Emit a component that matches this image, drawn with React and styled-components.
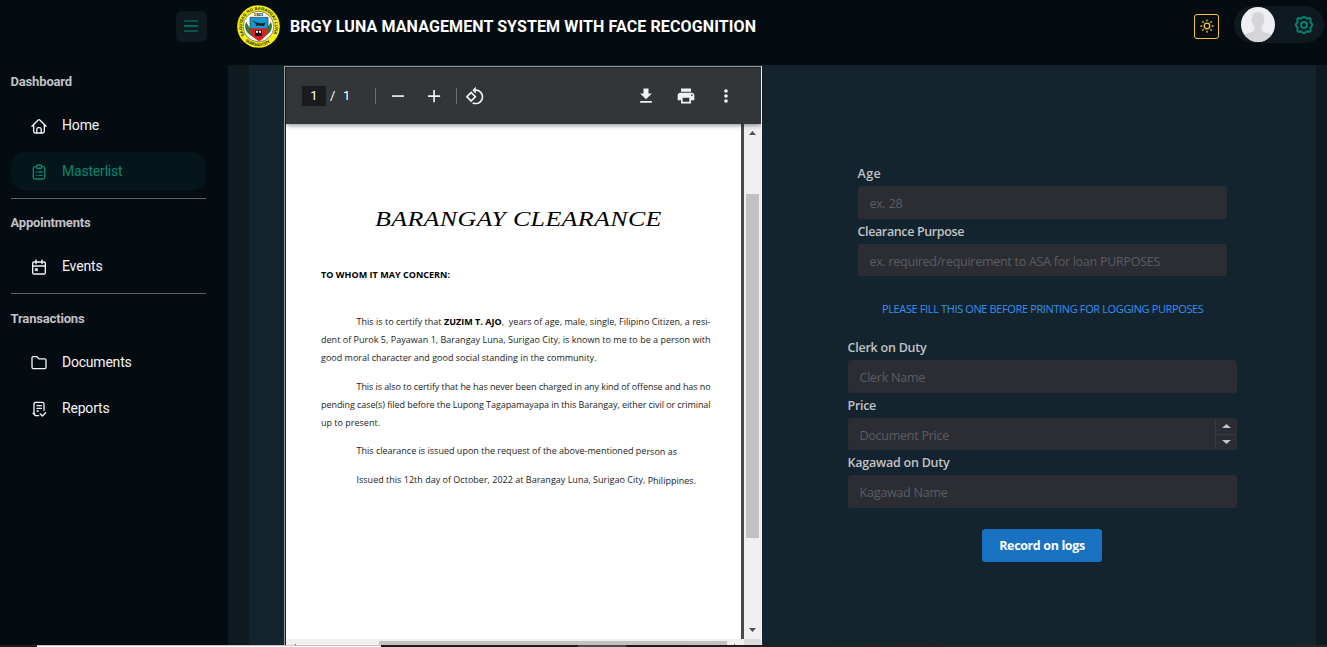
import React from "react";
import styled, { createGlobalStyle } from "styled-components";

const GlobalStyle = createGlobalStyle`
  *, *::before, *::after { box-sizing: border-box; }
  html, body { margin: 0; padding: 0; background: #040b11; }
  body { overflow: hidden; font-family: Roboto, "Liberation Sans", sans-serif; }
`;

const uiFont = `"Open Sans", "Noto Sans", sans-serif`;
const headFont = `Roboto, "Liberation Sans", sans-serif`;
const scriptFont = `"Lucida Calligraphy", "Z003", "URW Chancery L", "Liberation Serif", serif`;

/* Letter spacing that makes a text of the given font take the given width. */
const pen = document.createElement("canvas").getContext("2d");
function tracking(text, font, width) {
  pen.font = font;
  return (width - pen.measureText(text).width) / text.length;
}

const Screen = styled.div`
  width: 1327px;
  height: 647px;
  display: flex;
  flex-direction: column;
  overflow: hidden;
  background: #040b11;
`;
const Body = styled.div`
  display: flex;
  height: 645px;
`;

/* ---------- sidebar ---------- */
const Sidebar = styled.aside`
  width: 228px;
  padding: 11px 22px 0 11px;
  display: flex;
  flex-direction: column;
`;
const MenuButton = styled.button`
  align-self: flex-end;
  width: 31px;
  height: 31px;
  margin-right: -1px;
  padding: 0 1px 1px 0;
  border: 0;
  border-radius: 6px;
  background: #0e1a20;
  display: flex;
  align-items: center;
  justify-content: center;
  color: #058372;
`;
const Section = styled.section`
  display: flex;
  flex-direction: column;
  gap: 7px;
  padding-top: ${(p) => p.$top}px;
`;
const SectionTitle = styled.h2`
  margin: 0 0 ${(p) => p.$gap}px -0.5px;
  height: 16px;
  font: 700 13px/16px ${headFont};
  letter-spacing: ${(p) => p.$track}px;
  color: #c1c2c5;
  white-space: nowrap;
`;
const NavItem = styled.a`
  height: 39px;
  display: flex;
  align-items: center;
  gap: 15px;
  padding-left: 20px;
  border-radius: 15px;
  font: 400 14px/18px ${headFont};
  letter-spacing: ${(p) => p.$track}px;
  color: ${(p) => (p.$active ? "#078672" : "#f4f4f5")};
  background: ${(p) => (p.$active ? "#05161a" : "transparent")};
  svg { flex: none; }
`;
const NavText = styled.span`
  padding-bottom: 2px;
`;
const Rule = styled.div`
  height: 1px;
  margin-top: ${(p) => p.$top}px;
  background: #5c5f66;
`;

/* ---------- header ---------- */
const Main = styled.div`
  width: 1099px;
  display: flex;
  flex-direction: column;
`;
const Header = styled.header`
  height: 65px;
  display: flex;
  align-items: flex-start;
  padding: 5px 3px 0 9px;
`;
const Title = styled.h1`
  margin: 12px 0 0 10px;
  flex: 1;
  font: 700 16px/20px ${headFont};
  letter-spacing: ${(p) => p.$track}px;
  color: #fff;
  white-space: nowrap;
`;
const ThemeButton = styled.button`
  width: 25px;
  height: 25px;
  margin: 9px 15px 0 0;
  padding: 0 0 1px;
  border: 1px solid #f5c535;
  border-radius: 3px;
  background: transparent;
  color: #f5c535;
  display: flex;
  align-items: center;
  justify-content: center;
`;
const UserPill = styled.div`
  width: 90px;
  height: 37px;
  margin-top: 1px;
  padding: 0 10px 0 7px;
  border-radius: 19px;
  background: #0e1a20;
  color: #058372;
  display: flex;
  align-items: center;
  justify-content: space-between;
`;

/* ---------- content ---------- */
const Content = styled.main`
  height: 580px;
  display: flex;
  padding: 1px 0 0 35px;
  margin-left: 21px;
  margin-right: 11px;
  background: #14242e;
`;
const Backdrop = styled.div`
  background: #0e1a20;
`;
const Viewer = styled.section`
  width: 478px;
  height: 581px;
  border: 1px solid;
  border-color: #9a9ca0 #f0f0f0 #f0f0f0 #9a9a9a;
  overflow: hidden;
`;
const ViewerInner = styled.div`
  height: 600px;
  border-left: 1px solid #12202a;
  border-top: 1px solid #22242e;
`;
const Toolbar = styled.div`
  position: relative;
  height: 56px;
  display: flex;
  align-items: center;
  padding: 0 25px 0 16px;
  background: #323639;
  color: #f1f1f1;
  box-shadow: 0 1px 5px rgba(0, 0, 0, 0.5);
  font: 400 13px/20px ${headFont};
`;
const PageNumber = styled.span`
  width: 24px;
  height: 20px;
  text-align: center;
  background: #191b1c;
  color: #fff;
`;
const PageTotal = styled.span`
  width: 49px;
  padding-left: 4px;
  word-spacing: 4.5px;
  color: #fff;
`;
const Separator = styled.span`
  width: 1px;
  height: 16px;
  background: #6b6e70;
`;
const ToolIcon = styled.span`
  display: flex;
  margin-left: ${(p) => p.$left || 0}px;
`;
const Push = styled.span`
  flex: 1;
`;
const ViewArea = styled.div`
  display: flex;
  height: 515px;
`;
const Paper = styled.article`
  width: 455px;
  padding: 82px 31px 0 35px;
  background: #fff;
  color: #222;
`;
const Gutter = styled.div`
  width: 3px;
  background: #484b4e;
`;
const VScroll = styled.div`
  width: 17px;
  padding: 7px 2px 7px;
  background: #f0f0f0;
  display: flex;
  flex-direction: column;
  align-items: center;
  color: #505050;
`;
const VThumb = styled.div`
  width: 13px;
  height: 344px;
  margin: 59px 0 auto;
  background: #c1c1c1;
`;
const HScroll = styled.div`
  height: 17px;
  display: flex;
  padding-left: 8.5px;
  background: linear-gradient(#f0f0f0, #f0f0f0) left / 458px 100% no-repeat #dcdcdc;
`;
const HThumb = styled.div`
  width: 348px;
  height: 13px;
  margin: 2px 0 0 83px;
  background: #c1c1c1;
`;
const Tick = styled.i`
  width: 1px;
  height: 1px;
  margin: 5px 0 0 ${(p) => p.$left || 0}px;
  background: #505050;
`;
const DocTitle = styled.h2`
  width: 240px;
  margin: 0 0 34px 54px;
  font: italic 400 22px/26px ${scriptFont};
  letter-spacing: ${(p) => p.$track}px;
  color: #000;
  white-space: nowrap;
  transform: scaleX(1.18);
  transform-origin: left;
`;
const Salutation = styled.p`
  margin: 0 0 29px;
  font: 700 9px/18px ${uiFont};
  letter-spacing: ${(p) => p.$track}px;
  color: #000;
`;
const Paragraph = styled.div`
  margin-bottom: ${(p) => p.$gap ?? 11}px;
`;
const Line = styled.div`
  height: 18px;
  padding-left: ${(p) => (p.$indent ? 35.5 : 0)}px;
  font: 400 9px/18px ${uiFont};
  letter-spacing: ${(p) => p.$track}px;
  white-space: pre;
  b { color: #000; }
`;
const Lowered = styled.span`
  position: relative;
  top: 1px;
`;

/* ---------- form ---------- */
const FormArea = styled.form`
  width: 389px;
  margin-left: 86px;
  padding-top: 98px;
`;
const Group = styled.div`
  padding: 0 ${(p) => p.$inset || 0}px;
`;
const Field = styled.label`
  display: flex;
  flex-direction: column;
  height: ${(p) => p.$height}px;
`;
const FieldLabel = styled.span`
  height: 22px;
  margin-left: -0.5px;
  font: 600 12.5px/19px ${uiFont};
  color: #c1c2c5;
`;
const InputBox = styled.span`
  display: flex;
  height: ${(p) => p.$height || 33}px;
  border-radius: 3.5px;
  background: #2c2d32;
  overflow: hidden;
`;
const Input = styled.input`
  flex: 1;
  min-width: 0;
  height: 33px;
  padding: 2px 11.5px 0;
  border: 0;
  outline: 0;
  background: transparent;
  font: 400 12.5px/18px ${uiFont};
  letter-spacing: ${(p) => p.$track}px;
  &::placeholder { color: #5a5d64; opacity: 1; }
`;
const Spinner = styled.span`
  width: 22px;
  padding: 1px 1px 1px 0;
  display: flex;
  flex-direction: column;
  color: #c1c2c5;
`;
const Step = styled.span`
  flex: 1;
  display: flex;
  align-items: center;
  justify-content: center;
  border-left: 1px solid #383a40;
  & + & { border-top: 1px solid #383a40; }
`;
const Notice = styled.p`
  margin: 0 0 19px;
  padding: 23px 0 0 34px;
  font: 400 11px/20px ${uiFont};
  letter-spacing: ${(p) => p.$track}px;
  color: #3391f2;
  white-space: nowrap;
`;
const SubmitButton = styled.button`
  display: block;
  width: 120px;
  height: 33px;
  margin: 0 0 0 134px;
  padding: 0;
  border: 0;
  border-radius: 3.5px;
  background: #1971c2;
  color: #fff;
  font: 700 12.5px/18px ${uiFont};
`;

/* ---------- bottom edge ---------- */
const Edge = styled.footer`
  height: 2px;
  display: flex;
  background: #1e1b1c;
`;
const EdgePart = styled.div`
  width: ${(p) => p.$w}px;
  background: ${(p) => p.$bg};
`;

/* ---------- drawings ---------- */
const Outline = ({ size = 16, w = 1.8, children }) => (
  <svg width={size} height={size} viewBox="0 0 24 24" fill="none" stroke="currentColor"
    strokeWidth={w} strokeLinecap="round" strokeLinejoin="round">{children}</svg>
);
const HomeIcon = () => (
  <Outline w={2}>
    <path d="M1.5 12.5 10.8 3a1.7 1.7 0 0 1 2.4 0l9.3 9.5" />
    <path d="M4 10.5V20a2.5 2.5 0 0 0 2.5 2.5h11A2.5 2.5 0 0 0 20 20v-9.5" />
    <path d="M8.7 22.3V17a2.6 2.6 0 0 1 2.6-2.6h1.4a2.6 2.6 0 0 1 2.6 2.6v5.3" />
  </Outline>
);
const ClipboardIcon = () => (
  <Outline w={2}>
    <path d="M8 4H6a2.5 2.5 0 0 0-2.5 2.5v13A2.5 2.5 0 0 0 6 22.500h12a2.500 2.500 0 0 0 2.500-2.500V6.500A2.500 2.500 0 0 0 18 4h-2" />
    <path d="M9.500 1.500h5L16.500 4l-2 2.800h-5L7.500 4z" />
    <path d="M8 12h.5M12 12h4.500M8 17h.5M12 17h4.500" />
  </Outline>
);
const CalendarIcon = () => (
  <Outline w={2}>
    <rect x="2.500" y="4.500" width="19" height="18" rx="2" />
    <path d="M2.500 10.500h19M7.500 1.500v5.500M16.500 1.500v5.500" />
    <rect x="6.700" y="14.500" width="3" height="3" fill="currentColor" strokeWidth="1" />
  </Outline>
);
const FolderIcon = () => (
  <Outline w={2}>
    <path d="M1.500 4.500a2 2 0 0 1 2-2h5.300l3 3.200h8.700a2 2 0 0 1 2 2V18.500a2 2 0 0 1-2 2h-17a2 2 0 0 1-2-2z" />
  </Outline>
);
const ReportIcon = () => (
  <Outline w={2}>
    <path d="M19.500 14V4.500a2.500 2.500 0 0 0-2.500-2.500H7a2.500 2.500 0 0 0-2.500 2.500v14.500" />
    <path d="M3 18.500h2.500M4.500 18.500A3.500 3.500 0 0 0 8 22H11.500" />
    <path d="M9 7h6.500M9 11h6.500M9 15h2M14 19.500l3 3 5-5" />
  </Outline>
);
const MenuIcon = () => (
  <svg width="14" height="12" viewBox="0 0 14 12" fill="currentColor">
    <rect y="0.500" width="14" height="1" /><rect y="5.200" width="14" height="1.500" /><rect y="10.500" width="14" height="1" />
  </svg>
);
const SunIcon = () => (
  <Outline size={14} w={2.200}>
    <circle cx="12" cy="12" r="4.800" />
    <path d="M12 1.500v1.500M12 21v1.500M1.500 12H3M21 12h1.500M4.600 4.600l1 1M18.400 18.400l1 1M4.600 19.400l1-1M18.400 5.600l1-1" />
  </Outline>
);
const GearIcon = () => (
  <Outline size={20} w={2.400}>
    <circle cx="12" cy="12" r="3.500" />
    <path d="M9.900 3.500a2.300 2.300 0 0 1 4.200 0 2.300 2.300 0 0 0 2.500.7 2.300 2.300 0 0 1 3.200 3.200 2.300 2.300 0 0 0 .7 2.500 2.300 2.300 0 0 1 0 4.200 2.300 2.300 0 0 0-.7 2.500 2.300 2.300 0 0 1-3.200 3.200 2.300 2.300 0 0 0-2.500.7 2.300 2.300 0 0 1-4.200 0 2.300 2.300 0 0 0-2.500-.7 2.300 2.300 0 0 1-3.200-3.200 2.300 2.300 0 0 0-.7-2.500 2.300 2.300 0 0 1 0-4.200 2.300 2.300 0 0 0 .7-2.500 2.300 2.300 0 0 1 3.200-3.200 2.300 2.300 0 0 0 2.500-.7z" />
  </Outline>
);
const Avatar = () => (
  <svg width="34" height="35" viewBox="0 0 34 35">
    <defs><clipPath id="face"><ellipse cx="17" cy="17.500" rx="17" ry="17.500" /></clipPath></defs>
    <g clipPath="url(#face)">
      <rect width="34" height="35" fill="#efeef3" />
      <path d="M17 5c4.300 0 6.500 3 6 7.300 1 .7.500 3.200-.7 3.700-.3 2-1 3-1.800 4v3.500c2 2.500 9 2 12.500 6V35H1v-5.500c3.500-4 10.500-3.500 12.500-6V20c-.8-1-1.500-2-1.800-4-1.200-.5-1.700-3-.7-3.700C10.500 8 12.700 5 17 5z" fill="#d5d5d8" />
    </g>
  </svg>
);
const SealSvg = styled.svg`
  display: block;
  overflow: visible;
  font: 700 4.200px "Liberation Sans", sans-serif;
`;
const Seal = () => (
  <SealSvg width="43" height="43" viewBox="0 0 43 43">
    <defs>
      <path id="sealTop" d="M7.600 30.500a16.600 16.600 0 1 1 27.800 0" />
      <path id="sealBottom" d="M8.300 36a19.700 19.700 0 0 0 26.400 0" />
    </defs>
    <circle cx="21.500" cy="21.500" r="21.300" fill="#f4ef0c" />
    <circle cx="21.500" cy="21.500" r="15.300" fill="#fff" stroke="#3b3b10" strokeWidth="0.600" />
    <g fill="#222">
      <text textLength="69"><textPath href="#sealTop">SAGUISAG NG BARANGAY LUNA</textPath></text>
      <text textLength="27"><textPath href="#sealBottom">SURIGAO CITY</textPath></text>
    </g>
    <path d="M9.500 17.500c-2 3-1 9 3.500 12l4 2.500c0-4-2-6-3.500-8M33.500 17.500c2 3 1 9-3.500 12l-4 2.500c0-4 2-6 3.500-8" fill="#2f7d36" stroke="#174d1c" strokeWidth="0.700" />
    <g transform="translate(0 -5)">
      <text x="21.500" y="16" textAnchor="middle">1923</text>
      <path d="M13 17.300h18v11.200H13z" fill="#1896cf" stroke="#222" strokeWidth="0.600" />
      <path d="M13 28.500h18c0 6-4.500 10.500-9 12.700C17.500 39 13 34.500 13 28.500z" fill="#da2222" />
      <path d="m15.500 20.500 6 2.500 4 .500 3-1-1.500 3.500-5-.5-3.500.5 1-1.500z" fill="#14202a" />
      <path d="M18.200 30h6.600v6h-6.600z" fill="#111" />
      <path d="M19 30.800h2v2h-2zM22 30.800h2v2h-2z" fill="#fff" />
    </g>
  </SealSvg>
);
const Glyph = ({ size = 24, children }) => (
  <svg width={size} height={size} viewBox="0 0 24 24" fill="currentColor">{children}</svg>
);
const Triangle = ({ down, w = 7, h = 4 }) => (
  <svg width={w} height={h} viewBox="0 0 8 4" preserveAspectRatio="none" fill="currentColor">
    <path d={down ? "M0 0h8L4 4z" : "M0 4h8L4 0z"} />
  </svg>
);

/* ---------- parts ---------- */
const Heading = ({ text, width, gap }) => (
  <SectionTitle $gap={gap} $track={tracking(text, `700 13px ${headFont}`, width)}>{text}</SectionTitle>
);
const Nav = ({ icon, text, width, active }) => (
  <NavItem $active={active} $track={tracking(text, `400 14px ${headFont}`, width)}>
    {icon}<NavText>{text}</NavText>
  </NavItem>
);
const LabelText = styled.span`
  letter-spacing: ${(p) => p.$track}px;
`;
const Label = ({ text, width, weight = 600 }) => (
  <LabelText $track={tracking(text, `${weight} 12.5px ${uiFont}`, width)}>{text}</LabelText>
);
const TextField = ({ label, labelWidth, hint, hintWidth, height = 58, box, children }) => (
  <Field $height={height}>
    <FieldLabel><Label text={label} width={labelWidth} /></FieldLabel>
    <InputBox $height={box}>
      <Input placeholder={hint} $track={tracking(hint, `400 12.5px ${uiFont}`, hintWidth)} />
      {children}
    </InputBox>
  </Field>
);
const DocLine = ({ text, width, indent, children }) => (
  <Line $indent={indent} $track={tracking(text, `400 9px ${uiFont}`, width)}>{children || text}</Line>
);

const docTitle = "BARANGAY CLEARANCE";
const greeting = "TO WHOM IT MAY CONCERN:";
const appTitle = "BRGY LUNA MANAGEMENT SYSTEM WITH FACE RECOGNITION";
const notice = "PLEASE FILL THIS ONE BEFORE PRINTING FOR LOGGING PURPOSES";

export default function App() {
  return (
    <Screen>
      <GlobalStyle />
      <Body>
        <Sidebar>
          <MenuButton><MenuIcon /></MenuButton>
          <Section $top={32}>
            <Heading text="Dashboard" width={61.500} gap={9} />
            <Nav icon={<HomeIcon />} text="Home" width={37} />
            <Nav icon={<ClipboardIcon />} text="Masterlist" width={60.500} active />
          </Section>
          <Rule $top={7} />
          <Section $top={16}>
            <Heading text="Appointments" width={80} gap={9} />
            <Nav icon={<CalendarIcon />} text="Events" width={40.500} />
          </Section>
          <Rule $top={7} />
          <Section $top={17}>
            <Heading text="Transactions" width={74} gap={9} />
            <Nav icon={<FolderIcon />} text="Documents" width={69.500} />
            <Nav icon={<ReportIcon />} text="Reports" width={47.500} />
          </Section>
        </Sidebar>

        <Main>
          <Header>
            <Seal />
            <Title $track={tracking(appTitle, `700 16px ${headFont}`, 466.500)}>{appTitle}</Title>
            <ThemeButton><SunIcon /></ThemeButton>
            <UserPill><Avatar /><GearIcon /></UserPill>
          </Header>
          <Backdrop>
            <Content>
              <Viewer>
                <ViewerInner>
                  <Toolbar>
                    <PageNumber>1</PageNumber>
                    <PageTotal>/ 1</PageTotal>
                    <Separator />
                    <ToolIcon $left={13}>
                      <Glyph size={18}><path d="M4 11h16v2.200H4z" /></Glyph>
                    </ToolIcon>
                    <ToolIcon $left={18}>
                      <Glyph size={18}><path d="M4 11h7V4h2.200v7h7v2.200h-7v7H11v-7H4z" /></Glyph>
                    </ToolIcon>
                    <ToolIcon $left={13}><Separator /></ToolIcon>
                    <ToolIcon $left={8}>
                      <Glyph size={20}><path d="M7.340 6.410.860 12.900l6.490 6.480 6.490-6.480-6.500-6.490zM3.690 12.900l3.660-3.660L11 12.900l-3.660 3.660-3.650-3.660zM19.360 6.640A8.950 8.950 0 0 0 13 4V.760L8.760 5 13 9.240V6c1.790 0 3.580.680 4.950 2.050a7.007 7.007 0 0 1 0 9.900 6.973 6.973 0 0 1-7.920 1.440l-1.490 1.490C10.020 21.620 11.510 22 13 22a8.980 8.980 0 0 0 6.360-2.640 8.980 8.980 0 0 0 0-12.720z" /></Glyph>
                    </ToolIcon>
                    <Push />
                    <ToolIcon>
                      <Glyph size={20}><path d="M19 9h-4V3H9v6H5l7 7 7-7zM5 18v2h14v-2H5z" /></Glyph>
                    </ToolIcon>
                    <ToolIcon $left={20}>
                      <Glyph size={20}><path d="M19 8H5c-1.660 0-3 1.340-3 3v6h4v4h12v-4h4v-6c0-1.660-1.340-3-3-3zm-3 11H8v-5h8v5zm3-7c-.550 0-1-.450-1-1s.450-1 1-1 1 .450 1 1-.450 1-1 1zm-1-9H6v4h12V3z" /></Glyph>
                    </ToolIcon>
                    <ToolIcon $left={20}>
                      <Glyph size={20}><circle cx="12" cy="6" r="2.200" /><circle cx="12" cy="12" r="2.200" /><circle cx="12" cy="18" r="2.200" /></Glyph>
                    </ToolIcon>
                  </Toolbar>
                  <ViewArea>
                    <Paper>
                      <DocTitle $track={tracking(docTitle, `italic 400 22px ${scriptFont}`, 243)}>{docTitle}</DocTitle>
                      <Salutation $track={tracking(greeting, `700 9px ${uiFont}`, 129)}>{greeting}</Salutation>
                      <Paragraph>
                        <DocLine indent width={351} text="This is to certify that ZUZIM T. AJO,  years of age, male, single, Filipino Citizen, a resi-">
                          This is to certify that <b>ZUZIM T. AJO</b>,{"  "}years of age, male, single, Filipino Citizen, a resi-
                        </DocLine>
                        <DocLine width={389.500} text="dent of Purok 5, Payawan 1, Barangay Luna, Surigao City, is known to me to be a person with" />
                        <DocLine width={275.500} text="good moral character and good social standing in the community." />
                      </Paragraph>
                      <Paragraph $gap={10}>
                        <DocLine indent width={354} text="This is also to certify that he has never been charged in any kind of offense and has no" />
                        <DocLine width={389.500} text="pending case(s) filed before the Lupong Tagapamayapa in this Barangay, either civil or criminal" />
                        <DocLine width={59} text="up to present." />
                      </Paragraph>
                      <Paragraph>
                        <DocLine indent width={320.500} text="This clearance is issued upon the request of the above-mentioned person as">
                          This clearance is issued upon the request of the above-mentioned pe<Lowered>rson as</Lowered>
                        </DocLine>
                      </Paragraph>
                      <DocLine indent width={339.500} text="Issued this 12th day of October, 2022 at Barangay Luna, Surigao City, Philippines.">
                        Issued this 12th day of October, 2022 at Barangay Luna, Surigao City, <Lowered>Philippines.</Lowered>
                      </DocLine>
                    </Paper>
                    <Gutter />
                    <VScroll>
                      <Triangle />
                      <VThumb />
                      <Triangle down />
                    </VScroll>
                  </ViewArea>
                  <HScroll>
                    <Tick />
                    <HThumb />
                    <Tick $left={7} />
                  </HScroll>
                </ViewerInner>
              </Viewer>

              <FormArea>
                <Group $inset={10}>
                  <TextField label="Age" labelWidth={23.500} hint="ex. 28" hintWidth={33} />
                  <TextField label="Clearance Purpose" labelWidth={106.500} hint="ex. required/requirement to ASA for loan PURPOSES" hintWidth={290.500} height={54} box={32} />
                </Group>
                <Notice $track={tracking(notice, `400 11px ${uiFont}`, 321.500)}>{notice}</Notice>
                <Group>
                  <TextField label="Clerk on Duty" labelWidth={79} hint="Clerk Name" hintWidth={65.500} />
                  <TextField label="Price" labelWidth={28.500} hint="Document Price" hintWidth={89.500} height={57} box={32}>
                    <Spinner>
                      <Step><Triangle w={9} /></Step>
                      <Step><Triangle w={9} down /></Step>
                    </Spinner>
                  </TextField>
                  <TextField label="Kagawad on Duty" labelWidth={102} hint="Kagawad Name" hintWidth={88} height={76} />
                </Group>
                <SubmitButton type="button"><Label text="Record on logs" width={85.500} weight={700} /></SubmitButton>
              </FormArea>
            </Content>
          </Backdrop>
        </Main>
      </Body>
      <Edge>
        <EdgePart $w={37} $bg="#1c1c1c" />
        <EdgePart $w={344} $bg="linear-gradient(#c4c5c6 50%, #fff 50%)" />
        <EdgePart $w={197} $bg="#1e1b1c" />
        <EdgePart $w={48} $bg="#4c4a4b" />
        <EdgePart $w={701} $bg="linear-gradient(90deg, #1e1b1c, #222822 50%, #232a22)" />
      </Edge>
    </Screen>
  );
}
